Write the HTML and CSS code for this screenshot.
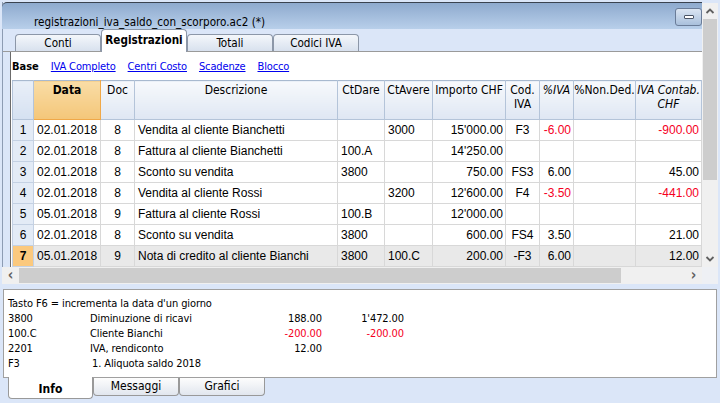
FILE: index.html
```html
<!DOCTYPE html>
<html lang="it">
<head>
<meta charset="utf-8">
<title>registrazioni_iva_saldo_con_scorporo.ac2</title>
<link rel="stylesheet" href="styles.css">
</head>
<body>
<div class="app">
  <div class="top">
    <div class="main">
      <div class="frame">
        <div class="titlebar">
          <span class="title">registrazioni_iva_saldo_con_scorporo.ac2 (*)</span>
          <div class="minbtn"><span class="minbar"></span></div>
        </div>
        <div class="tabstrip">
          <div class="tab">Conti</div>
          <div class="tab active">Registrazioni</div>
          <div class="tab">Totali</div>
          <div class="tab">Codici IVA</div>
        </div>
        <div class="content">
          <div class="views">
            <span class="view-current">Base</span>
            <a class="view-link">IVA Completo</a>
            <a class="view-link">Centri Costo</a>
            <a class="view-link">Scadenze</a>
            <a class="view-link">Blocco</a>
          </div>
          <table class="grid">
            <colgroup>
              <col class="c-num"><col class="c-date"><col class="c-doc"><col class="c-desc"><col class="c-dare"><col class="c-avere"><col class="c-imp"><col class="c-cod"><col class="c-iva"><col class="c-nd"><col class="c-ivac">
            </colgroup>
            <thead>
              <tr>
                <th class="h-num"></th>
                <th class="h-date">Data</th>
                <th>Doc</th>
                <th>Descrizione</th>
                <th>CtDare</th>
                <th>CtAvere</th>
                <th>Importo CHF</th>
                <th>Cod.<br>IVA</th>
                <th class="it">%IVA</th>
                <th>%Non.Ded.</th>
                <th class="it">IVA Contab.<br>CHF</th>
              </tr>
            </thead>
            <tbody>
              <tr>
                <td class="num">1</td><td>02.01.2018</td><td class="ctr">8</td><td>Vendita al cliente Bianchetti</td><td></td><td>3000</td><td class="r">15'000.00</td><td class="ctr">F3</td><td class="r neg">-6.00</td><td></td><td class="r neg">-900.00</td>
              </tr>
              <tr>
                <td class="num">2</td><td>02.01.2018</td><td class="ctr">8</td><td>Fattura al cliente Bianchetti</td><td>100.A</td><td></td><td class="r">14'250.00</td><td></td><td></td><td></td><td></td>
              </tr>
              <tr>
                <td class="num">3</td><td>02.01.2018</td><td class="ctr">8</td><td>Sconto su vendita</td><td>3800</td><td></td><td class="r">750.00</td><td class="ctr">FS3</td><td class="r">6.00</td><td></td><td class="r">45.00</td>
              </tr>
              <tr>
                <td class="num">4</td><td>02.01.2018</td><td class="ctr">8</td><td>Vendita al cliente Rossi</td><td></td><td>3200</td><td class="r">12'600.00</td><td class="ctr">F4</td><td class="r neg">-3.50</td><td></td><td class="r neg">-441.00</td>
              </tr>
              <tr>
                <td class="num">5</td><td>05.01.2018</td><td class="ctr">9</td><td>Fattura al cliente Rossi</td><td>100.B</td><td></td><td class="r">12'000.00</td><td></td><td></td><td></td><td></td>
              </tr>
              <tr>
                <td class="num">6</td><td>02.01.2018</td><td class="ctr">8</td><td>Sconto su vendita</td><td>3800</td><td></td><td class="r">600.00</td><td class="ctr">FS4</td><td class="r">3.50</td><td></td><td class="r">21.00</td>
              </tr>
              <tr class="sel">
                <td class="num">7</td><td>05.01.2018</td><td class="ctr">9</td><td>Nota di credito al cliente Bianchi</td><td>3800</td><td>100.C</td><td class="r">200.00</td><td class="ctr">-F3</td><td class="r">6.00</td><td></td><td class="r">12.00</td>
              </tr>
            </tbody>
          </table>
        </div>
      </div>
      <div class="hscroll">
        <span class="arrow">&#8249;</span>
        <div class="htrack"><div class="hthumb"></div></div>
        <span class="arrow">&#8250;</span>
      </div>
    </div>
    <div class="vscroll">
      <svg class="varrow" width="16" height="14" viewBox="0 0 16 14"><path d="M4.5 9 L8 5.5 L11.5 9" fill="none" stroke="#606060" stroke-width="1.8"/></svg>
      <div class="vtrack"><div class="vthumb"></div></div>
      <svg class="varrow" width="16" height="14" viewBox="0 0 16 14"><path d="M4.5 5 L8 8.5 L11.5 5" fill="none" stroke="#606060" stroke-width="1.8"/></svg>
      <div class="corner"></div>
    </div>
  </div>
  <div class="info">
    <div class="info-line">Tasto F6 = incrementa la data d'un giorno</div>
    <div class="info-row"><span class="i1">3800</span><span class="i2">Diminuzione di ricavi</span><span class="i3">188.00</span><span class="i4">1'472.00</span></div>
    <div class="info-row"><span class="i1">100.C</span><span class="i2">Cliente Bianchi</span><span class="i3 neg">-200.00</span><span class="i4 neg">-200.00</span></div>
    <div class="info-row"><span class="i1">2201</span><span class="i2">IVA, rendiconto</span><span class="i3">12.00</span><span class="i4"></span></div>
    <div class="info-row"><span class="i1">F3</span><span class="i2 ind">1. Aliquota saldo 2018</span></div>
  </div>
  <div class="btabs">
    <div class="btab active">Info</div>
    <div class="btab">Messaggi</div>
    <div class="btab">Grafici</div>
  </div>
</div>
</body>
</html>
```
FILE: styles.css
```css
* { box-sizing: border-box; }
html, body { margin: 0; padding: 0; }
body {
  width: 720px;
  height: 403px;
  overflow: hidden;
  background: #dbe6f8;
  font-family: "DejaVu Sans Condensed", "DejaVu Sans", sans-serif;
  font-stretch: condensed;
  font-size: 11px;
  color: #000;
}
.app { width: 720px; height: 403px; display: flex; flex-direction: column; }
.top { display: flex; height: 284px; }
.main { width: 702px; display: flex; flex-direction: column; }
.frame {
  height: 267px;
  margin-top: 2px;
  margin-left: 2px;
  border-left: 1px solid #8d9cb3;
  display: flex;
  flex-direction: column;
  background: #dbe6f8;
}
.titlebar {
  height: 27px;
  border-top: 1px solid #3a4350;
  border-top-left-radius: 5px;
  margin-left: -1px;
  background: linear-gradient(#8eaace, #b8cfea);
  display: flex;
  align-items: flex-start;
  padding-left: 32px;
  position: relative;
  z-index: 1;
}
.title { font-size: 11.6px; line-height: 14px; margin-top: 12px; flex: 1; }
.minbtn {
  width: 27px;
  height: 18px;
  border: 1px solid #6a7c98;
  border-radius: 3px;
  background: linear-gradient(#dbe5f2, #a9c0dc);
  display: flex;
  align-items: center;
  justify-content: center;
  margin-top: 5px;
}
.minbar { width: 10px; height: 4px; background: #fff; border: 1px solid #4b5566; border-radius: 1px; }
.tabstrip {
  height: 23px;
  display: flex;
  align-items: flex-end;
  padding-left: 12px;
  border-bottom: 1px solid #9a9a9a;
  background: #dbe6f8;
}
.tab {
  width: 86px;
  height: 17px;
  border: 1px solid #8c97a8;
  border-bottom: none;
  border-radius: 4px 4px 0 0;
  background: linear-gradient(#f4f7fb, #d8e1ee);
  text-align: center;
  font-size: 11.6px;
  line-height: 17px;
}
.tab.active {
  background: #fff;
  font-weight: bold;
  line-height: 21px;
  margin-bottom: -1px;
  height: 23px;
  position: relative;
  z-index: 2;
}
.content {
  flex: 1;
  margin-left: 7px;
  border-left: 1px solid #6b6b6b;
  background: #fff;
  overflow: hidden;
}
.views {
  height: 28px;
  display: flex;
  align-items: center;
  padding-left: 1px;
  gap: 12px;
  font-size: 11px;
}
.view-current { font-weight: bold; }
.view-link { color: #0000ee; text-decoration: underline; letter-spacing: -0.15px; }
.grid {
  margin-left: 1px;
  border-collapse: collapse;
  table-layout: fixed;
  width: 689px;
}
.c-num { width: 21px; }
.c-date { width: 67px; }
.c-doc { width: 34px; }
.c-desc { width: 203px; }
.c-dare { width: 47px; }
.c-avere { width: 48px; }
.c-imp { width: 73px; }
.c-cod { width: 34px; }
.c-iva { width: 34px; }
.c-nd { width: 62px; }
.c-ivac { width: 66px; }
.grid th {
  height: 39px;
  padding: 2px 0 0;
  vertical-align: top;
  font-weight: normal;
  font-size: 12px;
  line-height: 14px;
  text-align: center;
  background: linear-gradient(#f7f9fc, #dfe7f3);
  border: 1px solid #b4c4d9;
  border-top: 1px solid #a8b9cf;
  white-space: nowrap;
  overflow: hidden;
}
.grid th.it { font-style: italic; }
.grid th.h-num { background: linear-gradient(#e9eff8, #d5e1f1); }
.grid th.h-date {
  font-weight: bold;
  background: linear-gradient(#f9dda6, #f4c679);
  border-right: 1px solid #f0a848;
  border-bottom: 1px solid #f0a848;
}
.grid td {
  height: 21px;
  padding: 0 3px;
  font-family: "Liberation Sans", Arial, sans-serif;
  font-stretch: normal;
  font-size: 12px;
  border: 1px solid #d8d8d8;
  white-space: nowrap;
  overflow: hidden;
}
.grid td.num {
  background: #e3ebf6;
  text-align: center;
  padding: 0;
  border-color: #c4d1e3;
}
.grid td.ctr { text-align: center; }
.grid td.r { text-align: right; padding-right: 2px; }
.neg { color: #f5001e; }
.grid tr.sel td { background: #e9e9e9; }
.grid tr.sel td.num { background: #fbc97e; font-weight: bold; }
.hscroll {
  height: 17px;
  margin-left: 2px;
  display: flex;
  align-items: center;
  background: #f0f0f0;
}
.hscroll .arrow {
  width: 17px;
  text-align: center;
  font-family: "DejaVu Sans", sans-serif;
  font-size: 15px;
  font-weight: bold;
  color: #606060;
  line-height: 17px;
}
.htrack { flex: 1; height: 15px; }
.hthumb { width: 602px; height: 15px; background: #cdcdcd; }
.vscroll {
  width: 16px;
  margin-top: 3px;
  background: #f0f0f0;
  display: flex;
  flex-direction: column;
}
.varrow { display: block; height: 16px; }
.vtrack { height: 232px; }
.vthumb { height: 161px; margin: 0 1px; background: #cdcdcd; }
.corner { flex: 1; background: #eef0f4; }
.info {
  margin: 5px 3px 0 3px;
  height: 89px;
  background: #fff;
  border: 1px solid #a0a0a0;
  padding: 6px 0 0 4px;
  font-size: 11px;
  line-height: 15px;
  letter-spacing: -0.1px;
}
.info-row { display: flex; }
.i1 { width: 82px; }
.i2 { width: 170px; }
.i2.ind { padding-left: 2px; }
.i3 { width: 62px; text-align: right; }
.i4 { width: 82px; text-align: right; }
.btabs { display: flex; padding-left: 8px; height: 25px; align-items: flex-start; }
.btab {
  width: 86px;
  height: 18px;
  border: 1px solid #999;
  border-top: none;
  border-radius: 0 0 4px 4px;
  background: linear-gradient(#fdfdfd, #e1e6ee);
  text-align: center;
  font-size: 12px;
  line-height: 16px;
}
.btab.active {
  height: 22px;
  width: 85px;
  background: #fff;
  font-weight: bold;
  line-height: 24px;
  margin-top: -1px;
}
```
